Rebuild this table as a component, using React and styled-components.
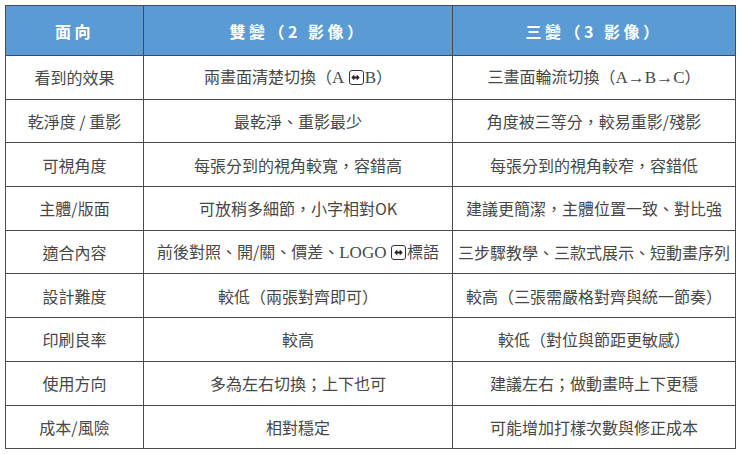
import styled, { createGlobalStyle } from "styled-components";

const GlobalStyle = createGlobalStyle`
  body {
    margin: 0;
    background: #ffffff;
    font-family: "Noto Sans CJK TC", "Noto Sans", sans-serif;
  }
`;

const Page = styled.div`
  padding: 5px 0 0 5px;
`;

const Table = styled.table`
  width: 730px;
  border-collapse: collapse;
  table-layout: fixed;
  border: 1px solid #4a4a4a;
`;

const HeadCell = styled.th`
  height: 49px;
  padding: 0;
  background: #5b9bd5;
  color: #ffffff;
  font-size: 16px;
  line-height: 20px;
  font-weight: 700;
  letter-spacing: 3.5px;
  text-align: center;
  border: 1px solid #4a4a4a;
`;

const Cell = styled.td`
  height: 42.7px;
  padding: 0 2px;
  color: #474747;
  font-size: 16px;
  line-height: 20px;
  font-weight: 400;
  text-align: center;
  white-space: nowrap;
  border: 1px solid #4a4a4a;
`;

const Latin = styled.span`
  font-family: "Liberation Serif", serif;
  font-size: 17px;
`;

const SwapBox = styled.span`
  display: inline-block;
  width: 15px;
  height: 15px;
  margin: 0 1px;
  border: 1.5px solid #333;
  border-radius: 3px;
  vertical-align: -2px;
  box-sizing: border-box;
  position: relative;

  svg {
    position: absolute;
    left: 1.5px;
    top: 2.5px;
  }
`;

function Swap() {
  return (
    <SwapBox>
      <svg width="9" height="7" viewBox="0 0 9 7">
        <path d="M0.3 3.5 L3.3 0.6 V2.5 H5.7 V0.6 L8.7 3.5 L5.7 6.4 V4.5 H3.3 V6.4 Z" fill="#222" />
      </svg>
    </SwapBox>
  );
}

const rows = [
  [
    "看到的效果",
    <>兩畫面清楚切換（<Latin>A</Latin> <Swap /><Latin>B</Latin>）</>,
    <>三畫面輪流切換（<Latin>A→B→C</Latin>）</>,
  ],
  ["乾淨度 / 重影", "最乾淨、重影最少", "角度被三等分，較易重影/殘影"],
  ["可視角度", "每張分到的視角較寬，容錯高", "每張分到的視角較窄，容錯低"],
  ["主體/版面", "可放稍多細節，小字相對OK", "建議更簡潔，主體位置一致、對比強"],
  [
    "適合內容",
    <>前後對照、開/關、價差、<Latin>LOGO</Latin> <Swap />標語</>,
    "三步驟教學、三款式展示、短動畫序列",
  ],
  ["設計難度", "較低（兩張對齊即可）", "較高（三張需嚴格對齊與統一節奏）"],
  ["印刷良率", "較高", "較低（對位與節距更敏感）"],
  ["使用方向", "多為左右切換；上下也可", "建議左右；做動畫時上下更穩"],
  ["成本/風險", "相對穩定", "可能增加打樣次數與修正成本"],
];

export default function App() {
  return (
    <Page>
      <GlobalStyle />
      <Table>
        <colgroup>
          <col style={{ width: "138px" }} />
          <col style={{ width: "309px" }} />
          <col style={{ width: "283px" }} />
        </colgroup>
        <thead>
          <tr>
            <HeadCell>面向</HeadCell>
            <HeadCell>雙變（2 影像）</HeadCell>
            <HeadCell>三變（3 影像）</HeadCell>
          </tr>
        </thead>
        <tbody>
          {rows.map((r, i) => (
            <tr key={i}>
              {r.map((c, j) => (
                <Cell key={j}>{c}</Cell>
              ))}
            </tr>
          ))}
        </tbody>
      </Table>
    </Page>
  );
}
